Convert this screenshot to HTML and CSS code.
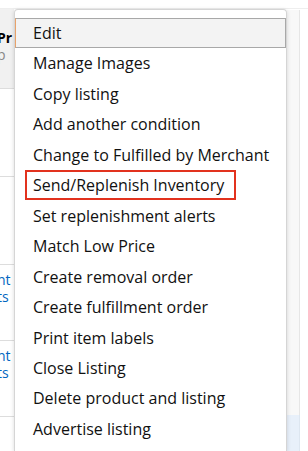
FILE: index.html
```html
<!DOCTYPE html>
<html lang="en">
<head>
    <meta charset="UTF-8">
    <meta name="viewport" content="width=device-width, initial-scale=1.0">
    <title>Manage Inventory</title>
    <link rel="stylesheet" href="styles.css">
</head>
<body>
    <div class="page">
        <div class="topbar"></div>
        <div class="row row-head">
            <div class="cell">
                <b>Pr</b>
                <span class="muted">p</span>
            </div>
        </div>
        <div class="row row-plain"></div>
        <div class="row row-plain"></div>
        <div class="row row-link">
            <a href="#">nt</a>
            <a href="#">ts</a>
        </div>
        <div class="row row-link">
            <a href="#">nt</a>
            <a href="#">ts</a>
        </div>
        <div class="row row-last"></div>
        <div class="side"></div>
        <div class="side-blue"></div>

        <ul class="menu">
            <li class="item active">Edit</li>
            <li class="item">Manage Images</li>
            <li class="item">Copy listing</li>
            <li class="item">Add another condition</li>
            <li class="item">Change to Fulfilled by Merchant</li>
            <li class="item"><span class="mark">Send/Replenish Inventory</span></li>
            <li class="item">Set replenishment alerts</li>
            <li class="item">Match Low Price</li>
            <li class="item">Create removal order</li>
            <li class="item">Create fulfillment order</li>
            <li class="item">Print item labels</li>
            <li class="item">Close Listing</li>
            <li class="item">Delete product and listing</li>
            <li class="item">Advertise listing</li>
        </ul>
    </div>
</body>
</html>
```
FILE: styles.css
```css
body {
    margin: 0px;
    background: white;
    font-family: "Open Sans", "Noto Sans", sans-serif;
    overflow: hidden;
}
.page {
    position: relative;
    height: 451px;
    overflow: hidden;
}
.topbar {
    height: 9px;
    border-bottom: 1px solid #eee;
    box-sizing: border-box;
}
.row {
    border-bottom: 1px solid #ddd;
    width: 14px;
    overflow: hidden;
    box-sizing: border-box;
}
.row-head {
    height: 80px;
    background: #f1f1f1;
    padding-top: 20px;
}
.cell {
    display: flex;
    flex-direction: column;
    font-size: 14px;
    line-height: 17px;
    margin-left: -3px;
}
.muted {
    color: #888;
}
.row-plain {
    height: 88px;
}
.row-link {
    height: 76px;
    padding-top: 6px;
    display: flex;
    flex-direction: column;
    font-size: 14px;
    line-height: 17px;
}
.row-link a {
    color: #0066c0;
    text-decoration: none;
    margin-left: -3px;
}
.row-last {
    height: 82px;
    border-bottom: 1px solid #aaa;
}
.side {
    position: absolute;
    top: 10px;
    left: 287px;
    width: 12px;
    height: 405px;
    background: #f8f8f8;
    border-right: 1px solid #e6e6e6;
}
.side-blue {
    position: absolute;
    top: 415px;
    left: 287px;
    width: 12px;
    height: 36px;
    background: #e8f0fa;
    border-right: 1px solid #dde6f0;
}
.menu {
    position: absolute;
    top: 9px;
    left: 14px;
    width: 273px;
    height: 442px;
    margin: 0px;
    padding: 8px 0px;
    list-style: none;
    background: white;
    border: 1px solid #d5d5d5;
    border-bottom: none;
    border-radius: 4px 4px 0px 0px;
    box-shadow: 0px 1px 4px rgba(0,0,0,0.15);
    box-sizing: border-box;
    overflow: hidden;
}
.item {
    height: 30.46px;
    line-height: 30px;
    padding-left: 18px;
    font-size: 16px;
    color: #111;
    white-space: nowrap;
    box-sizing: border-box;
}
.item.active {
    background: #f3f3f3;
    border: 1px solid #a8a8a8;
    border-left: 1px solid #e8a26a;
    padding-left: 17px;
    line-height: 28px;
}
.mark {
    display: inline-block;
    border: 2px solid #e2321e;
    line-height: 26px;
    padding: 0px 10px 0px 6px;
    margin-left: -8px;
}
```
